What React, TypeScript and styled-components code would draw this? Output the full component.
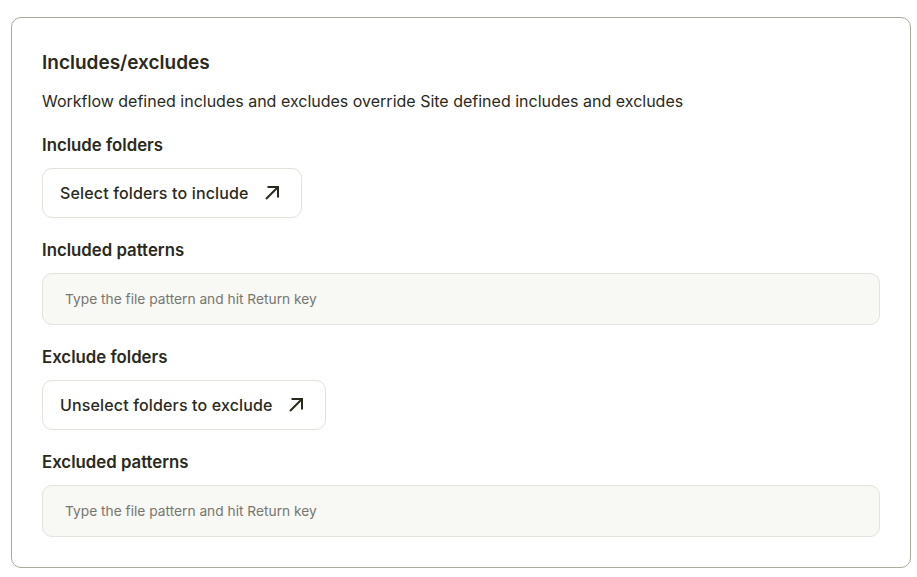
import React from "react";
import styled, { createGlobalStyle } from "styled-components";

const GlobalStyle = createGlobalStyle`
  * { box-sizing: border-box; }
  body {
    margin: 0;
    background: #ffffff;
    font-family: "Inter", "Noto Sans", sans-serif;
    color: #2a2a1c;
  }
`;

const Page = styled.div`
  padding: 17px 7px 10px 11px;
`;

const Card = styled.section`
  width: 900px;
  border: 1px solid #a9a99c;
  border-radius: 10px;
  padding: 33px 30px 30px 30px;
  display: flex;
  flex-direction: column;
`;

const Title = styled.h2`
  margin: 0;
  font-size: 19px;
  line-height: 24px;
  font-weight: 600;
`;

const Description = styled.p`
  margin: 14px 0 0;
  font-size: 16px;
  line-height: 24px;
  font-weight: 400;
`;

const Field = styled.div`
  margin-top: 20px;
  display: flex;
  flex-direction: column;
  align-items: flex-start;
  gap: 11px;
`;

const Label = styled.label`
  font-size: 16.8px;
  line-height: 24px;
  font-weight: 600;
`;

const LinkButton = styled.button`
  display: inline-flex;
  align-items: center;
  gap: 15px;
  height: 50px;
  padding: 0 21px 0 17px;
  background: #ffffff;
  border: 1px solid #e3e2dc;
  border-radius: 10px;
  font-family: inherit;
  font-size: 16px;
  letter-spacing: 0.15px;
  font-weight: 500;
  color: #2a2a1c;
  cursor: pointer;
`;

const PatternInput = styled.input`
  width: 100%;
  height: 52px;
  padding: 0 22px;
  background: #f8f8f5;
  border: 1px solid #e3e2dc;
  border-radius: 10px;
  font-family: "Inter", sans-serif;
  font-size: 13.75px;
  color: #2a2a1c;
  outline: none;

  &::placeholder {
    color: #77776f;
  }
`;

function ArrowIcon() {
  return (
    <svg width="16" height="16" viewBox="0 0 16 16" fill="none">
      <path
        d="M2 14 L14 2 M3.5 2 H14 V12.5"
        stroke="currentColor"
        strokeWidth="2"
        strokeLinecap="butt"
        strokeLinejoin="miter"
      />
    </svg>
  );
}

export default function App() {
  return (
    <>
      <GlobalStyle />
      <Page>
        <Card>
          <Title>Includes/excludes</Title>
          <Description>
            Workflow defined includes and excludes override Site defined includes and excludes
          </Description>

          <Field>
            <Label>Include folders</Label>
            <LinkButton>
              Select folders to include
              <ArrowIcon />
            </LinkButton>
          </Field>

          <Field>
            <Label>Included patterns</Label>
            <PatternInput placeholder="Type the file pattern and hit Return key" />
          </Field>

          <Field>
            <Label>Exclude folders</Label>
            <LinkButton>
              Unselect folders to exclude
              <ArrowIcon />
            </LinkButton>
          </Field>

          <Field>
            <Label>Excluded patterns</Label>
            <PatternInput placeholder="Type the file pattern and hit Return key" />
          </Field>
        </Card>
      </Page>
    </>
  );
}
